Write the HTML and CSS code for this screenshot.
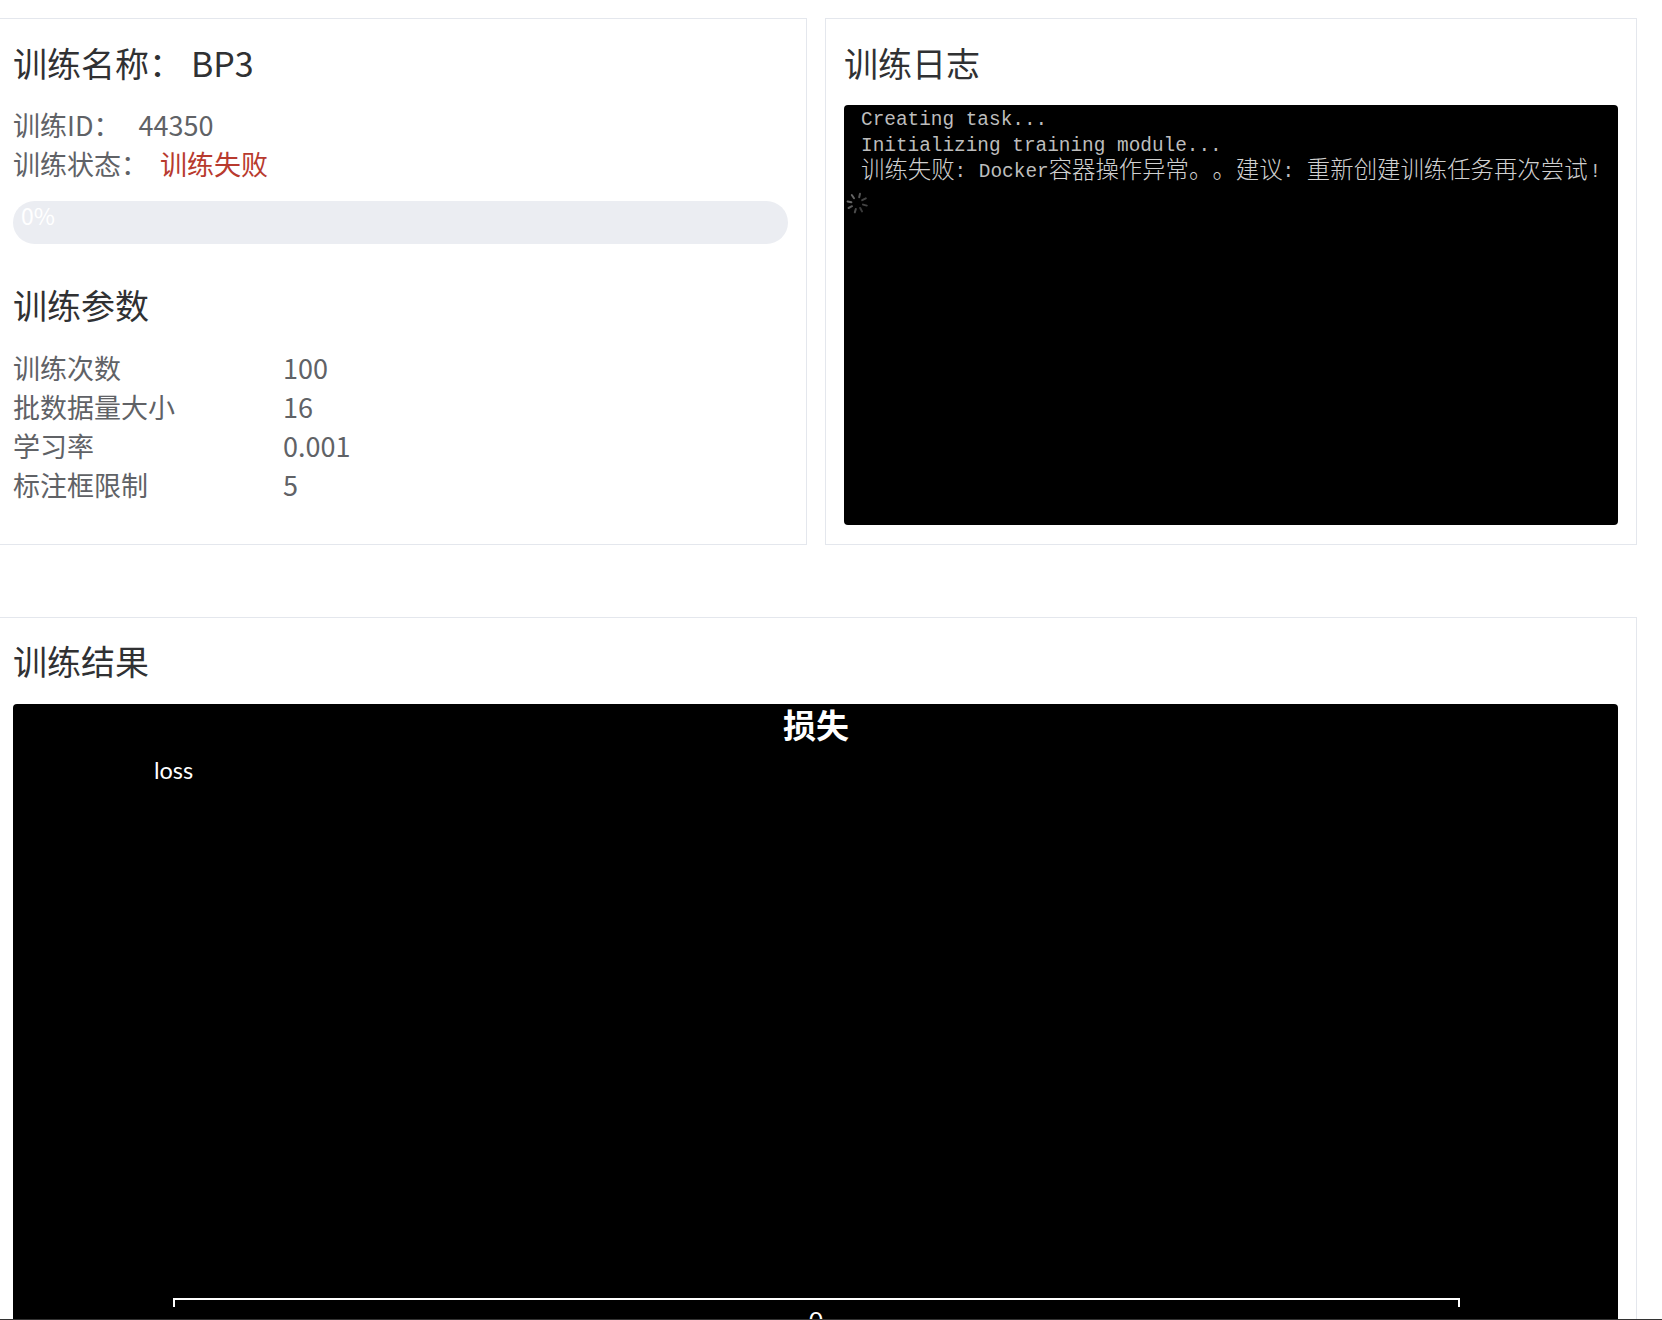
FILE: index.html
```html
<!DOCTYPE html>
<html lang="zh-CN">
<head>
<meta charset="utf-8">
<title>训练详情</title>
<link rel="stylesheet" href="styles.css">
</head>
<body>
<main class="page">
  <div class="top-row">
    <section class="card">
      <h3 class="title">训练名称：<span class="title-value">BP3</span></h3>
      <div class="meta">
        <div class="meta-row">训练ID：<span class="meta-value id-value">44350</span></div>
        <div class="meta-row">训练状态：<span class="meta-value status-failed">训练失败</span></div>
      </div>
      <div class="progress"><span class="progress-text">0%</span></div>
      <h3 class="title params-title">训练参数</h3>
      <div class="params">
        <div class="param"><span class="param-label">训练次数</span><span>100</span></div>
        <div class="param"><span class="param-label">批数据量大小</span><span>16</span></div>
        <div class="param"><span class="param-label">学习率</span><span>0.001</span></div>
        <div class="param"><span class="param-label">标注框限制</span><span>5</span></div>
      </div>
    </section>
    <section class="card">
      <h3 class="title">训练日志</h3>
      <div class="log">
        <div class="log-line">Creating task...</div>
        <div class="log-line">Initializing training module...</div>
        <div class="log-line"><span class="cjk">训练失败</span><span class="log-colon">:</span> Docker<span class="cjk">容器操作异常。。建议</span><span class="log-colon">:</span> <span class="cjk">重新创建训练任务再次尝试</span><span class="log-bang">!</span></div>
        <svg class="spinner" viewBox="0 0 24 24" width="24" height="24" aria-hidden="true">
          <g stroke-width="2" stroke-linecap="round" fill="none">
            <path stroke="#555" d="M14.2 6.2 15 2.8"/>
            <path stroke="#444" d="M17.2 9.2 20.8 7.4"/>
            <path stroke="#444" d="M18 13.6 21.8 14.6"/>
            <path stroke="#3a3a3a" d="M15.2 17 17 20.4"/>
            <path stroke="#4a4a4a" d="M10.8 18 9.8 21.4"/>
            <path stroke="#5a5a5a" d="M7 15.2 3.6 17"/>
            <path stroke="#666" d="M6.4 11.2 2.6 10.4"/>
            <path stroke="#666" d="M9 7.2 6.8 4"/>
          </g>
        </svg>
      </div>
    </section>
  </div>
  <section class="card results">
    <h3 class="title">训练结果</h3>
    <div class="chart">
      <svg class="chart-svg" viewBox="0 0 1605 640" width="1605" height="640">
        <text class="chart-title" x="803" y="34" text-anchor="middle">损失</text>
        <text class="chart-legend" x="141" y="75">loss</text>
        <path class="chart-axis" d="M161 603V595H1446V603"/>
        <text class="chart-tick" x="803" y="625" text-anchor="middle">0</text>
      </svg>
    </div>
  </section>
</main>
<div class="edge-line"></div>
</body>
</html>
```

FILE: styles.css
```css
html, body {
  margin: 0;
  padding: 0;
  height: 1320px;
  overflow: hidden;
  background: #fff;
}
body {
  position: relative;
  font-family: "Noto Sans CJK SC", "Noto Sans", sans-serif;
  color: #606266;
  text-spacing-trim: space-all;
}
.page {
  width: 1643px;
  margin-left: -6px;
  padding-top: 18px;
}
.top-row {
  display: grid;
  grid-template-columns: 813px 812px;
  gap: 18px;
}
.card {
  box-sizing: border-box;
  border: 1px solid #e4e7ed;
  background: #fff;
  padding: 18px;
  height: 527px;
}
.title {
  margin: 0;
  font-size: 34px;
  line-height: 52px;
  font-weight: 400;
  color: #303133;
}
.title-value {
  margin-left: 8px;
}
.meta {
  margin-top: 16px;
  font-size: 27px;
  line-height: 39px;
}
.meta-value {
  margin-left: 12px;
}
.id-value {
  margin-left: 18px;
}
.status-failed {
  color: #b83a2e;
}
.progress {
  margin-top: 18px;
  height: 43px;
  border-radius: 22px;
  background: #ebedf2;
  box-sizing: border-box;
  padding-left: 8px;
}
.progress-text {
  display: block;
  font-size: 23px;
  line-height: 28px;
  color: #fff;
}
.params-title {
  margin-top: 35px;
}
.params {
  margin-top: 17px;
  font-size: 27px;
  line-height: 39px;
}
.param {
  display: grid;
  grid-template-columns: 270px 1fr;
}
.log {
  position: relative;
  margin-top: 16px;
  height: 420px;
  box-sizing: border-box;
  background: #000;
  border-radius: 4px;
  padding: 2px 0 0 17px;
  font-family: "Liberation Mono", monospace;
  font-size: 19.4px;
  color: #bdbdbd;
}
.log-line {
  height: 26px;
  line-height: 26px;
  white-space: nowrap;
}
.cjk {
  font-family: "Noto Sans CJK SC", sans-serif;
  font-size: 23.4px;
  font-weight: 300;
  line-height: 0;
  color: #d0d0d0;
  vertical-align: -1px;
}
.log-colon {
  margin-right: 1px;
}
.log-bang {
  margin-left: 2px;
}
.spinner {
  position: absolute;
  left: 1px;
  top: 86px;
}
.results {
  margin-top: 72px;
  height: 760px;
  padding-top: 17px;
}
.results .title + .chart {
  margin-top: 17px;
}
.chart {
  height: 640px;
  background: #000;
  border-radius: 4px;
  overflow: hidden;
}
.chart-svg {
  display: block;
}
.chart-title {
  font-family: "Noto Sans CJK SC", sans-serif;
  font-size: 33px;
  font-weight: 700;
  fill: #fff;
}
.chart-legend {
  font-family: Lato, sans-serif;
  font-size: 23.5px;
  fill: #fff;
}
.chart-axis {
  fill: none;
  stroke: #fff;
  stroke-width: 2;
}
.chart-tick {
  font-family: Lato, sans-serif;
  font-size: 24px;
  fill: #fff;
}
.edge-line {
  position: absolute;
  left: 0;
  right: 0;
  bottom: 0;
  height: 1px;
  background: #333;
}
```
